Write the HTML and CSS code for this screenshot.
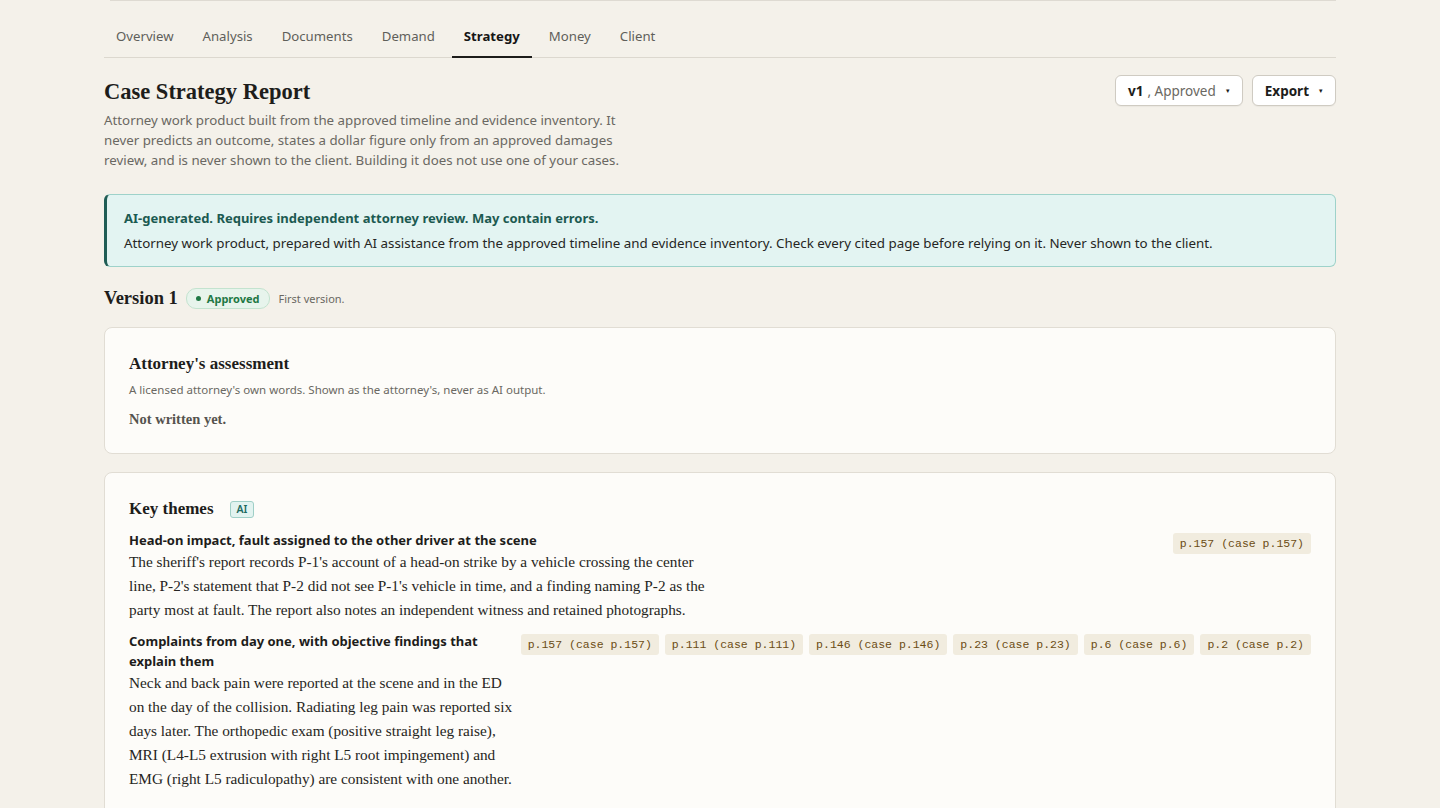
FILE: index.html
```html
<!DOCTYPE html>
<html lang="en">
<head>
    <meta charset="UTF-8">
    <meta name="viewport" content="width=device-width, initial-scale=1.0">
    <title>Case Strategy Report</title>
    <link rel="stylesheet" href="styles.css">
</head>
<body>
    <div class="page">
        <div class="top-rule"></div>

        <!-- Case tabs -->
        <nav class="tabs">
            <a class="tab">Overview</a>
            <a class="tab">Analysis</a>
            <a class="tab">Documents</a>
            <a class="tab">Demand</a>
            <a class="tab active">Strategy</a>
            <a class="tab">Money</a>
            <a class="tab">Client</a>
        </nav>

        <!-- Report header -->
        <div class="report-head">
            <div class="report-intro">
                <h1>Case Strategy Report</h1>
                <p>Attorney work product built from the approved timeline and evidence inventory. It never predicts an outcome, states a dollar figure only from an approved damages review, and is never shown to the client. Building it does not use one of your cases.</p>
            </div>
            <div class="report-actions">
                <button class="menu-button"><strong>v1</strong> <span class="muted">, Approved</span> <span class="caret">&#9662;</span></button>
                <button class="menu-button"><strong>Export</strong> <span class="caret">&#9662;</span></button>
            </div>
        </div>

        <!-- AI notice -->
        <div class="notice">
            <p class="notice-title">AI-generated. Requires independent attorney review. May contain errors.</p>
            <p class="notice-body">Attorney work product, prepared with AI assistance from the approved timeline and evidence inventory. Check every cited page before relying on it. Never shown to the client.</p>
        </div>

        <div class="version-row">
            <h2>Version 1</h2>
            <span class="status-pill"><span class="dot"></span>Approved</span>
            <span class="version-note">First version.</span>
        </div>

        <!-- Attorney assessment -->
        <section class="card">
            <h3>Attorney's assessment</h3>
            <p class="card-sub">A licensed attorney's own words. Shown as the attorney's, never as AI output.</p>
            <p class="empty">Not written yet.</p>
        </section>

        <!-- Key themes -->
        <section class="card">
            <h3>Key themes <span class="ai-tag">AI</span></h3>

            <div class="theme">
                <div class="theme-text">
                    <h4>Head-on impact, fault assigned to the other driver at the scene</h4>
                    <p>The sheriff's report records P-1's account of a head-on strike by a vehicle crossing the center line, P-2's statement that P-2 did not see P-1's vehicle in time, and a finding naming P-2 as the party most at fault. The report also notes an independent witness and retained photographs.</p>
                </div>
                <div class="cites">
                    <span class="cite">p.157 (case p.157)</span>
                </div>
            </div>

            <div class="theme">
                <div class="theme-text">
                    <h4>Complaints from day one, with objective findings that explain them</h4>
                    <p>Neck and back pain were reported at the scene and in the ED on the day of the collision. Radiating leg pain was reported six days later. The orthopedic exam (positive straight leg raise), MRI (L4-L5 extrusion with right L5 root impingement) and EMG (right L5 radiculopathy) are consistent with one another.</p>
                </div>
                <div class="cites">
                    <span class="cite">p.157 (case p.157)</span>
                    <span class="cite">p.111 (case p.111)</span>
                    <span class="cite">p.146 (case p.146)</span>
                    <span class="cite">p.23 (case p.23)</span>
                    <span class="cite">p.6 (case p.6)</span>
                    <span class="cite">p.2 (case p.2)</span>
                </div>
            </div>
        </section>
    </div>
</body>
</html>
```

FILE: styles.css
```css
body {
    margin: 0;
    padding: 0;
    background-color: #f4f1ea;
    color: #1d1d1b;
    font-family: "Noto Sans", Arial, sans-serif;
}

.page {
    max-width: 1232px;
    margin: 0 auto;
}

.top-rule {
    height: 1px;
    background-color: #dedad2;
    margin-left: 6px;
}

.tabs {
    display: flex;
    gap: 5px;
    margin-top: 11px;
    border-bottom: 1px solid #dcd8cf;
}

.tab {
    padding: 14px 12px 10px;
    font-size: 13.2px;
    line-height: 20px;
    color: #5f5f5a;
    border-bottom: 2px solid transparent;
    margin-bottom: -1px;
}

.tab.active {
    color: #161616;
    font-weight: 700;
    border-bottom-color: #1d1d1b;
}

.report-head {
    display: flex;
    justify-content: space-between;
    align-items: flex-start;
    margin-top: 20px;
}

.report-intro h1 {
    margin: 0 0 4px;
    font-family: "Liberation Serif", serif;
    font-size: 22.5px;
    line-height: 28px;
    font-weight: 700;
}

.report-intro p {
    margin: 0;
    max-width: 530px;
    font-size: 13.3px;
    line-height: 20px;
    color: #6a6862;
}

.report-actions {
    display: flex;
    gap: 9px;
    margin-top: -3px;
}

.menu-button {
    display: flex;
    align-items: center;
    gap: 4px;
    height: 31px;
    padding: 0 12px;
    background-color: #fff;
    border: 1px solid #cfcbc2;
    border-radius: 6px;
    font-family: "Noto Sans", Arial, sans-serif;
    font-size: 13.5px;
    color: #1d1d1b;
    box-shadow: 0 1px 1px rgba(0, 0, 0, 0.04);
}

.menu-button .muted {
    color: #6a6862;
}

.caret {
    font-size: 7px;
    margin-left: 6px;
}

.notice {
    margin-top: 24px;
    padding: 13px 18px 13px 17px;
    background-color: #e3f4f2;
    border: 1px solid #9ed2ca;
    border-left: 3px solid #1f5d55;
    border-radius: 6px;
}

.notice p {
    margin: 0;
    line-height: 20px;
}

.notice-title {
    font-size: 13px;
    color: #1c5a51;
    font-weight: 700;
    margin-bottom: 5px !important;
}

.notice-body {
    font-size: 13.35px;
    color: #262624;
}

.version-row {
    display: flex;
    align-items: center;
    gap: 8px;
    margin-top: 20px;
    margin-bottom: 18px;
}

.version-row h2 {
    margin: 0;
    font-family: "Liberation Serif", serif;
    font-size: 18.5px;
    line-height: 22px;
    font-weight: 700;
}

.status-pill {
    display: inline-flex;
    align-items: center;
    gap: 6px;
    padding: 2px 9px;
    background-color: #e7f4ec;
    border: 1px solid #c3e3cf;
    border-radius: 10px;
    font-size: 11px;
    font-weight: 700;
    color: #1f7845;
}

.dot {
    width: 5px;
    height: 5px;
    border-radius: 50%;
    background-color: #1f7845;
}

.version-note {
    margin-left: 1px;
    font-size: 11px;
    color: #6a6862;
}

.card {
    background-color: #fdfcf9;
    border: 1px solid #e1ddd4;
    border-radius: 8px;
    padding: 24px 24px 24px 24px;
    margin-bottom: 18px;
}

.card h3 {
    display: flex;
    align-items: center;
    gap: 16px;
    margin: 0;
    font-family: "Liberation Serif", serif;
    font-size: 17px;
    line-height: 24px;
    font-weight: 700;
}

.card-sub {
    margin: 6px 0 0;
    font-size: 11.5px;
    line-height: 16px;
    color: #6a6862;
}

.empty {
    margin: 11px 0 0;
    font-family: "Liberation Serif", serif;
    font-size: 14.5px;
    line-height: 20px;
    font-weight: 700;
    color: #55534e;
}

.ai-tag {
    padding: 0 6px;
    background-color: #e2f3f0;
    border: 1px solid #9fcfc7;
    border-radius: 3px;
    font-family: "Noto Sans", Arial, sans-serif;
    font-size: 10.5px;
    line-height: 15px;
    font-weight: 600;
    color: #1d6a5f;
}

.theme {
    display: flex;
    justify-content: space-between;
    align-items: flex-start;
    gap: 8px;
    margin-top: 9px;
}

.theme-text {
    flex: 0 1 580px;
}

.theme-text h4 {
    margin: 0;
    font-size: 13px;
    line-height: 20px;
    font-weight: 700;
    color: #1d1d1b;
}

.theme-text p {
    margin: 0;
    font-family: "Liberation Serif", serif;
    font-size: 15.3px;
    line-height: 24px;
    color: #262522;
}

.cites {
    display: flex;
    flex-shrink: 0;
    gap: 6px;
    margin-top: 3px;
}

.cite {
    padding: 3px 7px;
    background-color: #f1ecdf;
    border-radius: 3px;
    font-family: "Liberation Mono", monospace;
    font-size: 11.5px;
    line-height: 15px;
    color: #6c4d14;
}
```
